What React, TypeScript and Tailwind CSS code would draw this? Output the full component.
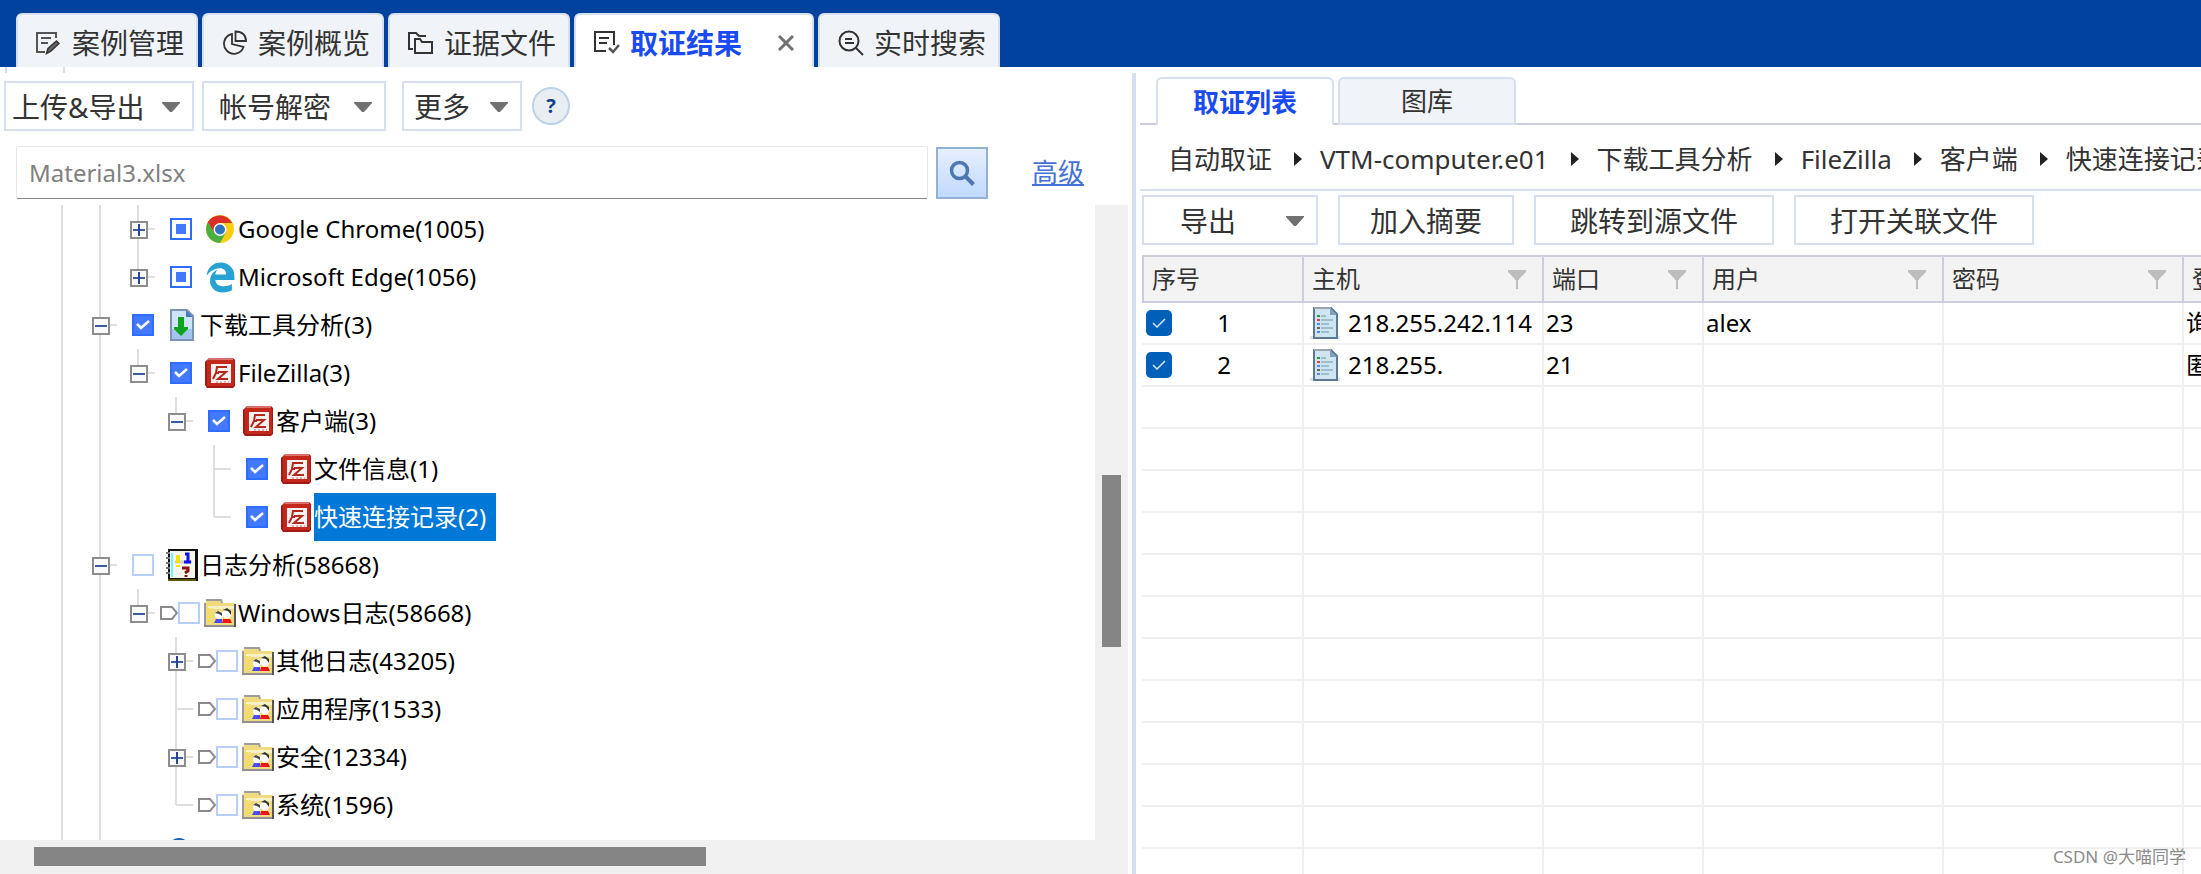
import type { ReactNode } from "react";
import { FaEdgeLegacy } from "react-icons/fa6";

type IconKind = "chrome" | "edge" | "download" | "filezilla" | "log" | "folder" | "disc";

type TreeItem = {
  label: string;
  level: number;
  icon: IconKind;
  check: "on" | "off" | "partial";
  expander?: "plus" | "minus";
  last?: boolean;
  tagged?: boolean;
  selected?: boolean;
};

const treeItems: TreeItem[] = [
  { label: "Google Chrome(1005)", level: 3, icon: "chrome", check: "partial", expander: "plus" },
  { label: "Microsoft Edge(1056)", level: 3, icon: "edge", check: "partial", expander: "plus", last: true },
  { label: "下载工具分析(3)", level: 2, icon: "download", check: "on", expander: "minus" },
  { label: "FileZilla(3)", level: 3, icon: "filezilla", check: "on", expander: "minus", last: true },
  { label: "客户端(3)", level: 4, icon: "filezilla", check: "on", expander: "minus", last: true },
  { label: "文件信息(1)", level: 5, icon: "filezilla", check: "on" },
  { label: "快速连接记录(2)", level: 5, icon: "filezilla", check: "on", last: true, selected: true },
  { label: "日志分析(58668)", level: 2, icon: "log", check: "off", expander: "minus" },
  { label: "Windows日志(58668)", level: 3, icon: "folder", check: "off", expander: "minus", last: true, tagged: true },
  { label: "其他日志(43205)", level: 4, icon: "folder", check: "off", expander: "plus", tagged: true },
  { label: "应用程序(1533)", level: 4, icon: "folder", check: "off", tagged: true },
  { label: "安全(12334)", level: 4, icon: "folder", check: "off", expander: "plus", tagged: true },
  { label: "系统(1596)", level: 4, icon: "folder", check: "off", last: true, tagged: true },
  { label: "", level: 2, icon: "disc", check: "off" },
];

const columns = [
  { title: "序号", filter: false },
  { title: "主机", filter: true },
  { title: "端口", filter: true },
  { title: "用户", filter: true },
  { title: "密码", filter: true },
  { title: "登录类型", filter: true },
];

const records = [
  { id: 1, host: "218.255.242.114", port: "23", user: "alex", password: "", login: "询问密码" },
  { id: 2, host: "218.255.", port: "21", user: "", password: "", login: "匿名" },
];

const crumbs = ["自动取证", "VTM-computer.e01", "下载工具分析", "FileZilla", "客户端", "快速连接记录"];

/* ---------- icons ---------- */

function Caret() {
  return (
    <svg width="18" height="10" viewBox="0 0 18 10" fill="#717171" className="shrink-0">
      <path d="M0 0h18v1l-8 9H8L0 1z" />
    </svg>
  );
}

function EditIcon() {
  return (
    <svg width="26" height="26" viewBox="0 0 26 26" fill="none" stroke="#555" strokeWidth="2">
      <path d="M20 8V3H1v19h8" />
      <path d="M5 8h10M5 13h7" />
      <path d="M10.500 23.500l1.500-5 8.500-7.500 2.500 2.500-8.500 8z" fill="#666" stroke="#333" strokeWidth="1.500" />
    </svg>
  );
}

function PieIcon() {
  return (
    <svg width="26" height="26" viewBox="0 0 26 26" fill="none" stroke="#333" strokeWidth="1.800">
      <path d="M10 4a10 10 0 1 0 11.500 13L10 14z" />
      <path d="M13.500 1.500V11h10.500c0-6-4-9.500-10.500-9.500z" />
    </svg>
  );
}

function FoldersIcon() {
  return (
    <svg width="26" height="26" viewBox="0 0 26 26" fill="none" stroke="#333" strokeWidth="2">
      <path d="M5 19H1V3h7l3 3h7" />
      <path d="M7 23V9h5l2 3h10v11z" />
    </svg>
  );
}

function ResultIcon() {
  return (
    <svg width="26" height="26" viewBox="0 0 26 26" fill="none" stroke="#333" strokeWidth="2">
      <path d="M20 15V2H1v19h11" />
      <path d="M5 8h10M5 13h8" />
      <path d="M15 18l4 4 6-7" stroke="#555" strokeWidth="2.500" />
    </svg>
  );
}

function SearchListIcon() {
  return (
    <svg width="26" height="26" viewBox="0 0 26 26" fill="none" stroke="#333" strokeWidth="2">
      <circle cx="11" cy="11" r="9.500" />
      <path d="M7 9h7M7 13h9M18 18l7 7" />
    </svg>
  );
}

function ChromeIcon() {
  return (
    <svg width="28" height="28" viewBox="0 0 28 28">
      <circle cx="14" cy="14" r="14" fill="#fccd12" />
      <path d="M1.900 7A14 14 0 0 0 14 28l6-10.500L14 14z" fill="#4caf43" />
      <path d="M1.900 7a14 14 0 0 1 24.200 1H14l-6 9z" fill="#dc2f25" />
      <circle cx="14" cy="14.500" r="6.500" fill="#fff" />
      <circle cx="14" cy="14.500" r="5" fill="#2f74bd" />
    </svg>
  );
}

function DownloadIcon() {
  return (
    <svg width="24" height="32" viewBox="0 0 24 32">
      <path d="M1 1h16l6 6v24H1z" fill="#cfe3fa" stroke="#7d93b5" strokeWidth="2" />
      <path d="M2 20h20v10H2z" fill="#a3c4ec" />
      <path d="M16 1v7h7z" fill="#4a78bd" />
      <path d="M8 8h6v10h4v2l-7 7-7-7v-2h4z" fill="#0ea31f" />
    </svg>
  );
}

function FileZillaIcon() {
  return (
    <svg width="30" height="30" viewBox="0 0 30 30">
      <path d="M0 4L4 0h24l2 2v26l-2 2H2l-2-3z" fill="#a31a12" />
      <path d="M4 0h24v2H3z" fill="#d9706c" />
      <path d="M2 2h27v26H2z" fill="#c4271b" />
      <path d="M6 6h20v19H6z" fill="#f7f1f0" />
      <path d="M22 9H12l-1 6-3 6M13 14h8l-8 7h10M11 15h3" fill="none" stroke="#b5271d" strokeWidth="2" />
      <path d="M11 24h13" stroke="#dcb4b0" strokeWidth="2" strokeDasharray="2 2" />
    </svg>
  );
}

function LogIcon() {
  return (
    <svg width="32" height="32" viewBox="0 0 32 32">
      <path d="M2 0h30v32H2z" fill="#111" />
      <path d="M4 2h25v27H4z" fill="#f6f6ee" />
      <path d="M2 30h28v2H2z" fill="#5c5400" />
      <path d="M6 4v24" stroke="#6ff" strokeWidth="2" />
      <path d="M0 4h4M0 9h4M0 14h4M0 19h4M0 24h4" stroke="#777" strokeWidth="2" />
      <path d="M9 13h17" stroke="#d0d0d0" strokeWidth="3" />
      <path d="M12 6v8M12 16v2" stroke="#f5e400" strokeWidth="4" />
      <path d="M19 5h3v8M18 13h7" stroke="#11e" strokeWidth="3" fill="none" />
      <path d="M16 19h6v3l-3 2M20 26v2" stroke="#8d1010" strokeWidth="3" fill="none" />
    </svg>
  );
}

function FolderIcon() {
  return (
    <svg width="32" height="28" viewBox="0 0 32 28">
      <path d="M1 27V4l2-3h14l1 3h13v23z" fill="#f1db80" />
      <path d="M1 27V4M2 1h15l1 3" fill="none" stroke="#9c9c9c" strokeWidth="2" />
      <path d="M0 27h32" stroke="#8f8f8f" strokeWidth="2" />
      <path d="M31 5v23" stroke="#555" strokeWidth="2" />
      <path d="M4 7h26v3H4z" fill="#f8f0c8" />
      <path d="M5 5v20M8 9v16" stroke="#f8e23c" strokeWidth="1.500" strokeDasharray="2 2" />
      <circle cx="15" cy="16" r="4" fill="#fff" />
      <path d="M11 14l3-2 4 2v3l-3-2z" fill="#444" />
      <circle cx="23" cy="15" r="4.500" fill="#fff" />
      <path d="M19 11l4-2 4 3v4l-3-4z" fill="#333" />
      <path d="M10 24l2-4h6v4z" fill="#4b4bf0" />
      <path d="M18 24l1-4h7l2 4z" fill="#ee1515" />
    </svg>
  );
}

function DiscIcon() {
  return (
    <svg width="30" height="30" viewBox="0 0 30 30">
      <circle cx="12" cy="11" r="11" fill="#1462b5" />
    </svg>
  );
}

function DocIcon() {
  return (
    <svg width="30" height="32" viewBox="0 0 30 32" className="shrink-0">
      <path d="M0 29h30v3H0z" fill="#e2e2e2" />
      <path d="M4 1h17l6 6v24H4z" fill="#cfe6f2" stroke="#5d7892" strokeWidth="2" />
      <path d="M4 1h17" stroke="#9aa4ac" strokeWidth="2" />
      <path d="M20 1l7 7h-7z" fill="#7f9fba" />
      <path d="M11 9h5M11 13h12M11 17h8M11 21h12M11 25h8" stroke="#9dbecd" strokeWidth="2" />
      <path d="M7 9h3" stroke="#28a028" strokeWidth="2" />
      <path d="M7 13h3" stroke="#c44" strokeWidth="2" />
      <path d="M7 17h3M7 25h3" stroke="#58f" strokeWidth="2" />
      <path d="M7 21h3" stroke="#666" strokeWidth="2" />
    </svg>
  );
}

function FilterIcon() {
  return (
    <svg width="18" height="19" viewBox="0 0 18 19" fill="#bdbdbd" className="shrink-0">
      <path d="M0 0h18v2l-7 7v1h-1v9H8v-9H7V9L0 2z" />
    </svg>
  );
}

function NodeIcon({ kind }: { kind: IconKind }) {
  switch (kind) {
    case "chrome":
      return <ChromeIcon />;
    case "edge":
      return <FaEdgeLegacy size={31} color="#27a3d3" />;
    case "download":
      return <DownloadIcon />;
    case "filezilla":
      return <FileZillaIcon />;
    case "log":
      return <LogIcon />;
    case "folder":
      return <FolderIcon />;
    default:
      return <DiscIcon />;
  }
}

/* ---------- left panel ---------- */

function TreeCheck({ state, label }: { state: TreeItem["check"]; label: string }) {
  const border = state === "off" ? "border-[#b8cffc]" : "border-[#2f6dff]";
  const fill = state === "on" ? "bg-[#4379ff]" : "bg-white";
  return (
    <span className="grid shrink-0 place-items-center">
      <input
        type="checkbox"
        aria-label={label || "节点"}
        defaultChecked={state === "on"}
        className={`col-start-1 row-start-1 size-[22px] appearance-none border-2 ${border} ${fill}`}
      />
      {state === "on" && (
        <svg width="16" height="12" viewBox="0 0 16 12" className="pointer-events-none col-start-1 row-start-1">
          <path d="M2 5l4 4 8-7" fill="none" stroke="#fff" strokeWidth="2.500" />
        </svg>
      )}
      {state === "partial" && <span className="pointer-events-none col-start-1 row-start-1 size-[10px] bg-[#4379ff]" />}
    </span>
  );
}

function TreeBranch({ item }: { item: TreeItem }) {
  return (
    <span className="relative flex w-[38px] shrink-0 justify-center self-stretch">
      <span className={`w-[2px] bg-[#dfdfdf] ${item.last ? "h-1/2" : "h-full"}`} />
      {item.icon !== "disc" && <span className="absolute top-1/2 left-[19px] h-[2px] w-[17px] -translate-y-1/2 bg-[#dfdfdf]" />}
      {item.expander && (
        <button
          type="button"
          aria-label={item.expander === "plus" ? "展开" : "折叠"}
          className="absolute top-4 left-[11px] grid size-[18px] place-items-center border-2 border-[#8e8e8e] bg-[#fafafa]"
        >
          <span className="col-start-1 row-start-1 h-[2px] w-[12px] bg-[#3a5cab]" />
          {item.expander === "plus" && <span className="col-start-1 row-start-1 h-[12px] w-[2px] bg-[#274690]" />}
        </button>
      )}
    </span>
  );
}

function TreeRow({ item }: { item: TreeItem }) {
  const parents = Array.from({ length: item.level - 1 }, (_, i) => i + 1);
  return (
    <li className="flex h-12 shrink-0 items-center pl-[43px]">
      {parents.map((level) => (
        <span key={level} className="flex w-[38px] shrink-0 justify-center self-stretch">
          {level < 3 && <span className="w-[2px] bg-[#dfdfdf]" />}
        </span>
      ))}
      <TreeBranch item={item} />
      {item.tagged ? (
        <svg width="18" height="14" viewBox="0 0 18 14" fill="none" stroke="#8a8a8a" strokeWidth="2" className="ml-[3px] shrink-0">
          <path d="M1 1h11l5 6-5 6H1z" />
        </svg>
      ) : (
        <span className="w-[13px]" />
      )}
      <TreeCheck state={item.check} label={item.label} />
      <span className={`flex w-9 shrink-0 justify-center ${item.tagged ? "ml-[2px]" : "ml-[10px]"}`}>
        <NodeIcon kind={item.icon} />
      </span>
      <span
        className={`flex h-full items-center whitespace-nowrap ${item.selected ? "bg-[#0078d7] pr-[10px] text-white" : "text-black"}`}
      >
        {item.label}
      </span>
    </li>
  );
}

function LeftPanel() {
  return (
    <section className="flex min-h-0 min-w-0 flex-col">
      <div className="ml-[5px] h-[6px] w-[60px] shrink-0 border-x-2 border-[#d6dff0]" />
      <div className="mt-2 flex shrink-0 items-center pl-1 text-[28px] text-[#333]">
        <button type="button" className="flex h-[50px] w-[190px] items-center justify-between border-2 border-[#d6dff0] pt-[2px] pr-3 pl-[6px] whitespace-nowrap">
          上传&amp;导出
          <Caret />
        </button>
        <button type="button" className="ml-2 flex h-[50px] w-[184px] items-center justify-between border-2 border-[#d6dff0] pt-[2px] pr-3 pl-[15px]">
          帐号解密
          <Caret />
        </button>
        <button type="button" className="ml-4 flex h-[50px] w-[120px] items-center justify-between border-2 border-[#d6dff0] pt-[2px] pr-3 pl-[10px]">
          更多
          <Caret />
        </button>
        <button
          type="button"
          aria-label="帮助"
          className="ml-[10px] grid size-[38px] place-items-center rounded-full border-2 border-[#bed2e6] bg-[#e9eef3] text-xl font-bold text-[#113f8c]"
        >
          ?
        </button>
      </div>

      <div className="mt-[15px] flex shrink-0 items-center pr-12 pl-4">
        <input
          type="text"
          aria-label="搜索"
          defaultValue="Material3.xlsx"
          className="h-[53px] min-w-0 flex-1 rounded-[2px] border border-[#e8e8e8] border-b-[#858585] px-3 text-2xl text-[#808080] outline-none"
        />
        <button
          type="button"
          aria-label="查找"
          className="ml-2 grid h-[52px] w-[52px] place-items-center border-2 border-[#93b1d4] bg-linear-to-b from-[#e6efff] to-[#c0daff]"
        >
          <svg width="26" height="26" viewBox="0 0 26 26" fill="none" stroke="#4e78b4">
            <circle cx="10.500" cy="10.500" r="8" strokeWidth="3.500" />
            <path d="M16.500 16.500l8 8" strokeWidth="4" />
          </svg>
        </button>
        <a href="#advanced" className="ml-11 text-[26px] text-[#4472d6] underline">
          高级
        </a>
      </div>

      <div className="mt-[6px] flex min-h-0 flex-1">
        <ul className="flex min-w-0 flex-1 flex-col overflow-hidden text-2xl">
          {treeItems.map((item, i) => (
            <TreeRow key={i} item={item} />
          ))}
        </ul>
        <div className="w-[33px] shrink-0 bg-[#f0f0f0] px-[7px] pt-[270px]">
          <div className="h-[172px] bg-[#858585]" />
        </div>
        <div className="w-1 shrink-0" />
      </div>
      <div className="mr-1 h-[34px] shrink-0 bg-[#f0f0f0] py-[7px] pl-[34px]">
        <div className="h-[19px] w-[672px] bg-[#858585]" />
      </div>
    </section>
  );
}

/* ---------- right panel ---------- */

function ToolButton({ children, wide }: { children: ReactNode; wide?: boolean }) {
  return (
    <button
      type="button"
      className={`h-[50px] shrink-0 border-2 border-[#d6dff0] pt-[2px] whitespace-nowrap ${wide ? "w-[240px]" : "w-[176px]"}`}
    >
      {children}
    </button>
  );
}

function RecordTable() {
  const cell = "h-[42px] border-r-2 border-b-2 border-[#f0f0f0] px-[2px] whitespace-nowrap";
  const blanks = Array.from({ length: 12 }, (_, i) => i);
  return (
    <table className="w-[1282px] table-fixed border-separate border-spacing-0 text-2xl text-black">
      <colgroup>
        <col className="w-[162px]" />
        <col className="w-[240px]" />
        <col className="w-[160px]" />
        <col className="w-[240px]" />
        <col className="w-[240px]" />
        <col className="w-[240px]" />
      </colgroup>
      <thead>
        <tr>
          {columns.map((col) => (
            <th
              key={col.title}
              className="h-12 border-y-2 border-r-2 border-[#cccede] bg-[#f3f3f3] px-2 text-left font-normal text-[#333] first:border-l-2"
            >
              <span className="flex items-center justify-between pr-2">
                {col.title}
                {col.filter && <FilterIcon />}
              </span>
            </th>
          ))}
        </tr>
      </thead>
      <tbody>
        {records.map((row) => (
          <tr key={row.id}>
            <td className={cell}>
              <label className="flex items-center pl-[2px]">
                <span className="grid place-items-center">
                  <input
                    type="checkbox"
                    defaultChecked
                    className="col-start-1 row-start-1 size-[26px] appearance-none rounded-[5px] bg-[#0060b9]"
                  />
                  <svg width="14" height="10" viewBox="0 0 14 10" className="pointer-events-none col-start-1 row-start-1">
                    <path d="M1 5l4 4 8-8" fill="none" stroke="#d5e6f6" strokeWidth="1.500" />
                  </svg>
                </span>
                <span className="w-[104px] text-center leading-8">{row.id}</span>
              </label>
            </td>
            <td className={cell}>
              <span className="flex items-center gap-2 pl-1 leading-8">
                <DocIcon />
                {row.host}
              </span>
            </td>
            <td className={cell}>{row.port}</td>
            <td className={cell}>{row.user}</td>
            <td className={cell}>{row.password}</td>
            <td className={cell}>{row.login}</td>
          </tr>
        ))}
        {blanks.map((n) => (
          <tr key={n}>
            {columns.map((col) => (
              <td key={col.title} className={cell} />
            ))}
          </tr>
        ))}
      </tbody>
    </table>
  );
}

function RightPanel() {
  return (
    <section className="mt-[6px] flex min-h-0 min-w-0 flex-col overflow-hidden border-l-4 border-[#d6dff0] pl-1 text-[#333]">
      <div className="mt-1 flex h-12 shrink-0 text-[26px]">
        <span className="w-4 border-b-2 border-[#cccede]" />
        <button type="button" className="w-[178px] rounded-t-md border-2 border-b-0 border-[#d6dff0] bg-white font-bold text-[#1a4bf0]">
          取证列表
        </button>
        <span className="w-1 border-b-2 border-[#cccede]" />
        <button type="button" className="w-[178px] rounded-t-md border-2 border-[#d6dff0] bg-[#f0f3f8]">
          图库
        </button>
        <span className="flex-1 border-b-2 border-[#cccede]" />
      </div>

      <nav className="flex h-[66px] shrink-0 items-center gap-[22px] border-b-2 border-[#d6dff0] pt-1 pl-7 text-[26px] whitespace-nowrap">
        {crumbs.map((crumb, i) => (
          <span key={crumb} className="flex shrink-0 items-center gap-[18px]">
            {i > 0 && (
              <svg width="8" height="14" viewBox="0 0 8 14" fill="#222">
                <path d="M0 0l8 7-8 7z" />
              </svg>
            )}
            <a href="#crumb">{crumb}</a>
          </span>
        ))}
      </nav>

      <div className="mt-1 flex shrink-0 gap-5 pl-[2px] text-[28px]">
        <ToolButton>
          <span className="flex items-center justify-between pr-3 pl-9">
            导出
            <Caret />
          </span>
        </ToolButton>
        <ToolButton>加入摘要</ToolButton>
        <ToolButton wide>跳转到源文件</ToolButton>
        <ToolButton wide>打开关联文件</ToolButton>
      </div>

      <div className="mt-[10px] min-h-0 flex-1 overflow-hidden pl-[2px]">
        <RecordTable />
      </div>
    </section>
  );
}

/* ---------- page ---------- */

function MainTab({ icon, label }: { icon: ReactNode; label: string }) {
  return (
    <button
      type="button"
      className="flex h-[54px] items-center gap-[10px] rounded-t-md border-2 border-b-0 border-[#d6dff0] bg-[#f0f3f8] pt-1 pr-3 pl-[18px] whitespace-nowrap"
    >
      {icon}
      {label}
    </button>
  );
}

export default function App() {
  return (
    <div className="relative flex h-screen flex-col overflow-hidden bg-white font-['Noto_Sans','Noto_Sans_CJK_SC',sans-serif]">
      <header className="flex h-[67px] shrink-0 items-end gap-1 bg-[#00429e] pl-4 text-[28px] text-[#333]">
        <MainTab icon={<EditIcon />} label="案例管理" />
        <MainTab icon={<PieIcon />} label="案例概览" />
        <MainTab icon={<FoldersIcon />} label="证据文件" />
        <div className="flex h-[54px] items-center rounded-t-md border-2 border-b-0 border-[#d6dff0] bg-white pt-1 pr-[18px] pl-[18px]">
          <button type="button" className="flex items-center gap-[10px] font-bold whitespace-nowrap text-[#1a4bf0]">
            <ResultIcon />
            取证结果
          </button>
          <button type="button" aria-label="关闭" className="ml-[36px]">
            <svg width="16" height="16" viewBox="0 0 16 16" fill="none" stroke="#717171" strokeWidth="3">
              <path d="M1 1l14 14M15 1L1 15" />
            </svg>
          </button>
        </div>
        <MainTab icon={<SearchListIcon />} label="实时搜索" />
      </header>

      <main className="grid min-h-0 flex-1 grid-cols-[1132fr_1069fr] grid-rows-1">
        <LeftPanel />
        <RightPanel />
      </main>

      <p className="absolute right-[15px] bottom-[5px] text-[17px] text-[#8a8a8a]">CSDN @大喵同学</p>
    </div>
  );
}
